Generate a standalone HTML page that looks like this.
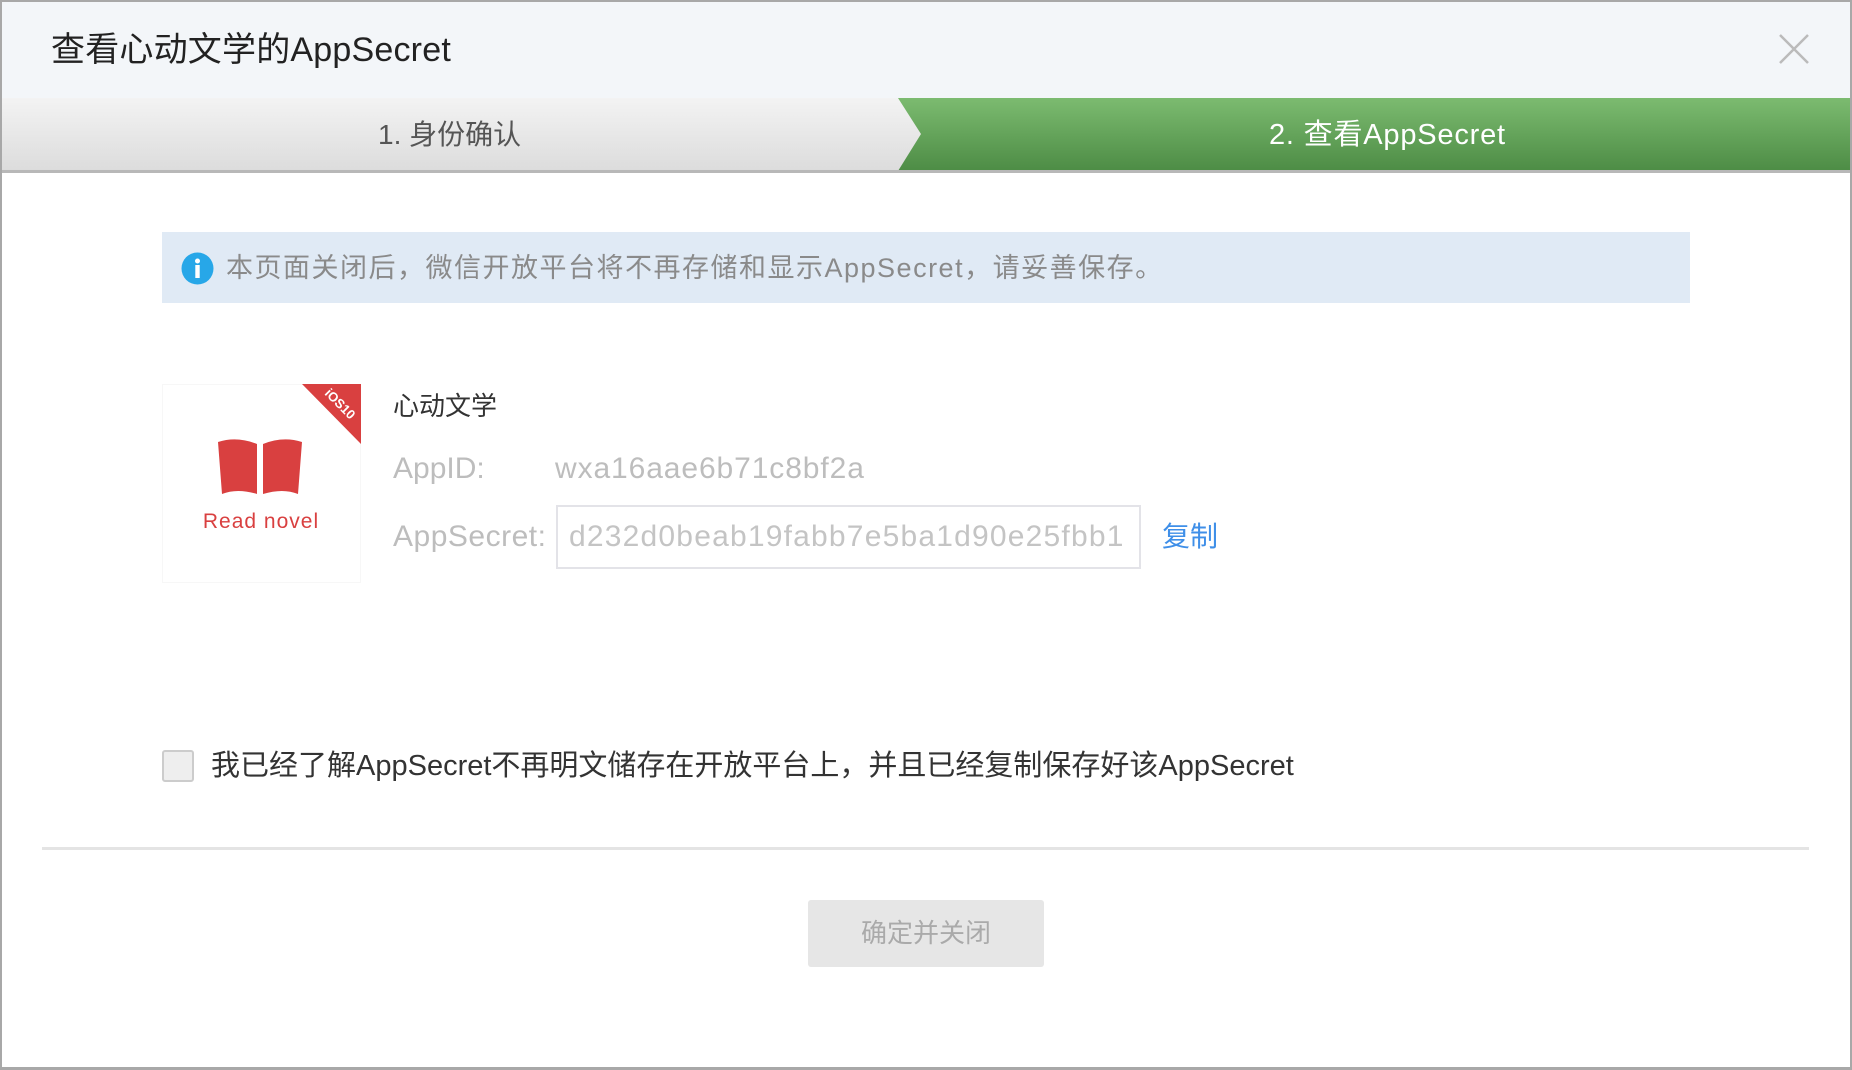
<!DOCTYPE html>
<html><head><meta charset="utf-8"><style>
*{margin:0;padding:0;box-sizing:border-box}
body{width:1852px;height:1070px;overflow:hidden;background:#fff;font-family:"Liberation Sans","Noto Sans CJK SC",sans-serif;position:relative}
.a{position:absolute;white-space:nowrap}
</style></head><body>
<div class="a" style="left:0;top:0;width:1852px;height:1070px;border:2px solid #a8a8a8;border-bottom:none"></div>
<div class="a" style="left:2px;top:2px;width:1848px;height:96px;background:#f3f6f9"></div>
<div class="a" style="left:51px;top:28px;font-size:34px;color:#222;line-height:44px;letter-spacing:0.2px">查看心动文学的AppSecret</div>
<svg class="a" style="left:1778px;top:33px" width="32" height="32"><path d="M2 2L30 30M30 2L2 30" stroke="#bbb" stroke-width="2.5"/></svg>
<svg class="a" style="left:2px;top:98px" width="1848" height="76">
<defs><linearGradient id="g1" x1="0" y1="0" x2="0" y2="1"><stop offset="0" stop-color="#f3f3f3"/><stop offset="1" stop-color="#dcdcdc"/></linearGradient>
<linearGradient id="g2" x1="0" y1="0" x2="0" y2="1"><stop offset="0" stop-color="#7cbb70"/><stop offset="1" stop-color="#4d8c45"/></linearGradient></defs>
<rect x="0" y="0" width="1848" height="73" fill="url(#g1)"/>
<polygon points="896,0 1848,0 1848,73 896,73 919,36" fill="url(#g2)"/>
<rect x="0" y="72" width="1848" height="3" fill="#b8b8b8"/>
</svg>
<div class="a" style="left:378px;top:115px;font-size:28px;color:#555;line-height:40px">1. 身份确认</div>
<div class="a" style="left:1269px;top:115px;font-size:29px;color:#fff;line-height:40px;letter-spacing:0.8px">2. 查看AppSecret</div>
<div class="a" style="left:162px;top:232px;width:1528px;height:71px;background:#e0eaf5"></div>
<svg class="a" style="left:181px;top:252px" width="33" height="33"><circle cx="16.5" cy="16.5" r="16" fill="#27a7e8"/><circle cx="16.5" cy="9" r="2.5" fill="#fff"/><rect x="14.3" y="13" width="4.4" height="13" fill="#fff"/></svg>
<div class="a" style="left:226px;top:250px;font-size:27px;color:#8a8a8a;line-height:36px;letter-spacing:1.5px">本页面关闭后，微信开放平台将不再存储和显示AppSecret，请妥善保存。</div>
<div class="a" style="left:162px;top:384px;width:199px;height:199px;background:#fff;border:1px solid #f7f7f7"></div>
<svg class="a" style="left:162px;top:384px" width="199" height="199">
<polygon points="140,0 199,0 199,60" fill="#d94040"/>
<text x="175" y="23" transform="rotate(45 175 23)" font-size="13" fill="#fff" text-anchor="middle" font-family="Liberation Sans" font-weight="bold">iOS10</text>
<path d="M56 58 Q75 52 95 60 L95 110 Q75 104 60 110 Z" fill="#d94040"/>
<path d="M101 60 Q121 52 140 58 L136 110 Q121 104 101 110 Z" fill="#d94040"/>
<text x="99" y="144" font-size="21" fill="#d94040" text-anchor="middle" font-family="Liberation Sans" letter-spacing="1">Read  novel</text>
</svg>
<div class="a" style="left:393px;top:388px;font-size:26px;color:#333;line-height:36px">心动文学</div>
<div class="a" style="left:393px;top:451px;font-size:30px;color:#bdbdbd;line-height:36px">AppID:</div>
<div class="a" style="left:555px;top:451px;font-size:30px;color:#bdbdbd;line-height:36px;letter-spacing:0.9px">wxa16aae6b71c8bf2a</div>
<div class="a" style="left:393px;top:519px;font-size:30px;color:#bdbdbd;line-height:36px;letter-spacing:0.5px">AppSecret:</div>
<div class="a" style="left:556px;top:505px;width:585px;height:64px;border:2px solid #e3e3e8;background:#fff"></div>
<div class="a" style="left:569px;top:519px;font-size:30px;color:#c4c4c4;line-height:36px;letter-spacing:1.2px">d232d0beab19fabb7e5ba1d90e25fbb1</div>
<div class="a" style="left:1162px;top:519px;font-size:28px;color:#3f8fe8;line-height:36px">复制</div>
<div class="a" style="left:162px;top:750px;width:32px;height:32px;border:2px solid #ccc;border-radius:3px;background:#eee"></div>
<div class="a" style="left:211px;top:746px;font-size:29px;color:#333;line-height:40px">我已经了解AppSecret不再明文储存在开放平台上，并且已经复制保存好该AppSecret</div>
<div class="a" style="left:42px;top:847px;width:1767px;height:3px;background:#e4e4e4"></div>
<div class="a" style="left:808px;top:900px;width:236px;height:67px;background:#e6e6e6;border-radius:3px;font-size:26px;color:#aaa;text-align:center;line-height:67px">确定并关闭</div>
<div class="a" style="left:0;top:1067px;width:1852px;height:3px;background:#a8a8a8"></div>
</body></html>
